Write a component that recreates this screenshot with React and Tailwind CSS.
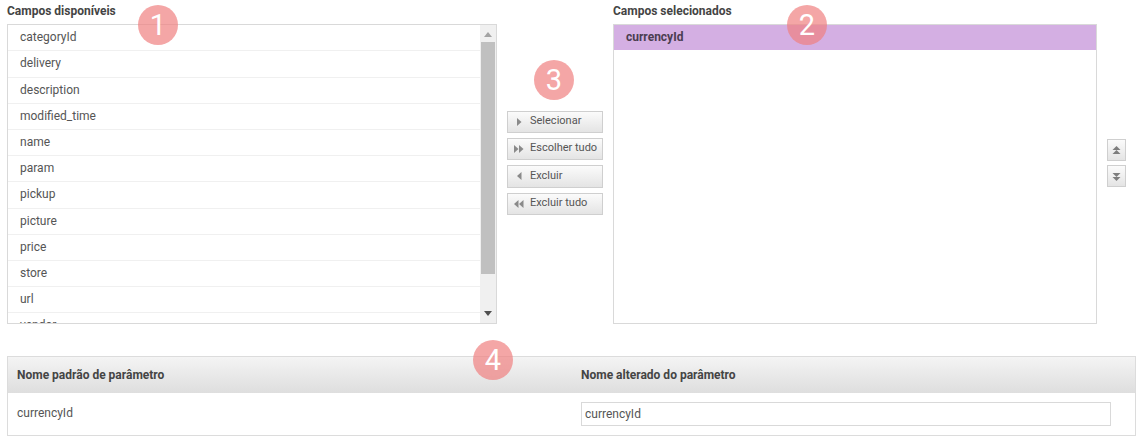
const fields = ["categoryId","delivery","description","modified_time","name","param","pickup","picture","price","store","url","vendor"];

function Badge({ n, className }) {
  return (
    <div className={"absolute w-10 h-10 rounded-full bg-[#ef8080]/70 text-white flex items-center justify-center text-[29px] leading-none font-normal " + className}>
      {n}
    </div>
  );
}

function Tri({ dir, double }) {
  const one = dir === "right" ? "M0 0L4.5 4L0 8Z" : "M4.5 0L0 4L4.5 8Z";
  return (
    <svg width={double ? 10 : 5} height="8" viewBox={double ? "0 0 10 8" : "0 0 5 8"} className="text-[#8a8a8a]" fill="currentColor">
      <path d={one} />
      {double && <path d={one} transform="translate(5 0)" />}
    </svg>
  );
}

function MoveBtn({ label, dir, double, h }) {
  return (
    <button className={"w-[96px] flex items-center border border-[#cfcfcf] bg-gradient-to-b from-[#fbfbfb] to-[#e4e4e4] text-[#555] text-[11px] pb-[1px] " + h}>
      <span className="w-[22px] flex justify-center"><Tri dir={dir} double={double} /></span>
      <span className="whitespace-nowrap">{label}</span>
    </button>
  );
}

function OrderBtn({ up }) {
  return (
    <button className="w-[19px] h-[22px] flex items-center justify-center border border-[#cfcfcf] bg-gradient-to-b from-[#fbfbfb] to-[#e4e4e4]">
      <svg width="9" height="9" viewBox="0 0 9 9" fill="#7d7d7d">
        {up
          ? <path d="M4.5 0L8.5 4H0.5ZM4.5 4L8.5 8H0.5Z" />
          : <path d="M0.5 1H8.5L4.5 5ZM0.5 5H8.5L4.5 9Z" />}
      </svg>
    </button>
  );
}

export default function App() {
  return (
    <div className="relative w-[1143px] h-[443px] bg-white overflow-hidden text-[12px] text-[#444] font-['Roboto',sans-serif]">
      <div className="flex items-start pl-[7px] pt-[3px]">
        <div className="w-[490px]">
          <div className="h-[21px] leading-[17px] font-bold text-[#444]">Campos disponíveis</div>
          <div className="relative h-[300px] border border-[#d9d9d9] overflow-hidden">
            <div className="mr-[16px] pt-[0.2px]">
              {fields.map((f) => (
                <div key={f} className="h-[26.2px] leading-[24px] pl-[12px] border-b border-[#f0f0f0] text-[12px] text-[#555]">{f}</div>
              ))}
            </div>
            <div className="absolute right-0 top-0 bottom-0 w-[16px] bg-[#f0f0f0] flex flex-col items-center">
              <svg className="mt-[7px]" width="8" height="5" viewBox="0 0 8 5" fill="#a3a3a3"><path d="M4 0L8 5H0Z" /></svg>
              <div className="mt-[5px] w-[14px] h-[232px] bg-[#c0c0c0]" />
              <svg className="mt-auto mb-[7px]" width="8" height="5" viewBox="0 0 8 5" fill="#505050"><path d="M0 0H8L4 5Z" /></svg>
            </div>
          </div>
        </div>

        <div className="w-[96px] ml-[10px] mt-[108px] flex flex-col gap-[5px]">
          <MoveBtn label="Selecionar" dir="right" h="h-[22px]" />
          <MoveBtn label="Escolher tudo" dir="right" double h="h-[22px]" />
          <MoveBtn label="Excluir" dir="left" h="h-[23px]" />
          <MoveBtn label="Excluir tudo" dir="left" double h="h-[22px]" />
        </div>

        <div className="w-[484px] ml-[10px]">
          <div className="h-[21px] leading-[17px] font-bold text-[#444]">Campos selecionados</div>
          <div className="h-[300px] border border-[#d9d9d9]">
            <div className="h-[25px] leading-[24px] pl-[12px] bg-[#d4afe3] font-bold text-[#4a3d50]">currencyId</div>
          </div>
        </div>

        <div className="ml-[10px] mt-[136px] flex flex-col gap-[4px]">
          <OrderBtn up />
          <OrderBtn />
        </div>
      </div>

      <div className="ml-[7px] mt-[32px] w-[1129px] h-[80px] border border-[#dcdcdc]">
        <div className="h-[36px] flex items-center bg-gradient-to-b from-[#f4f4f4] to-[#dedede] font-bold text-[#444]">
          <div className="w-[573px] pl-[9px]">Nome padrão de parâmetro</div>
          <div>Nome alterado do parâmetro</div>
        </div>
        <div className="h-[42px] flex items-center">
          <div className="w-[573px] pl-[9px] text-[#555] -mt-[3px]">currencyId</div>
          <input readOnly value="currencyId" className="w-[530px] h-[24px] border border-[#d9d9d9] px-[3px] text-[12px] text-[#555] outline-none" />
        </div>
      </div>

      <Badge n="1" className="left-[138px] top-[5px]" />
      <Badge n="2" className="left-[787px] top-[5px]" />
      <Badge n="3" className="left-[534px] top-[60px]" />
      <Badge n="4" className="left-[473px] top-[340px]" />
    </div>
  );
}
